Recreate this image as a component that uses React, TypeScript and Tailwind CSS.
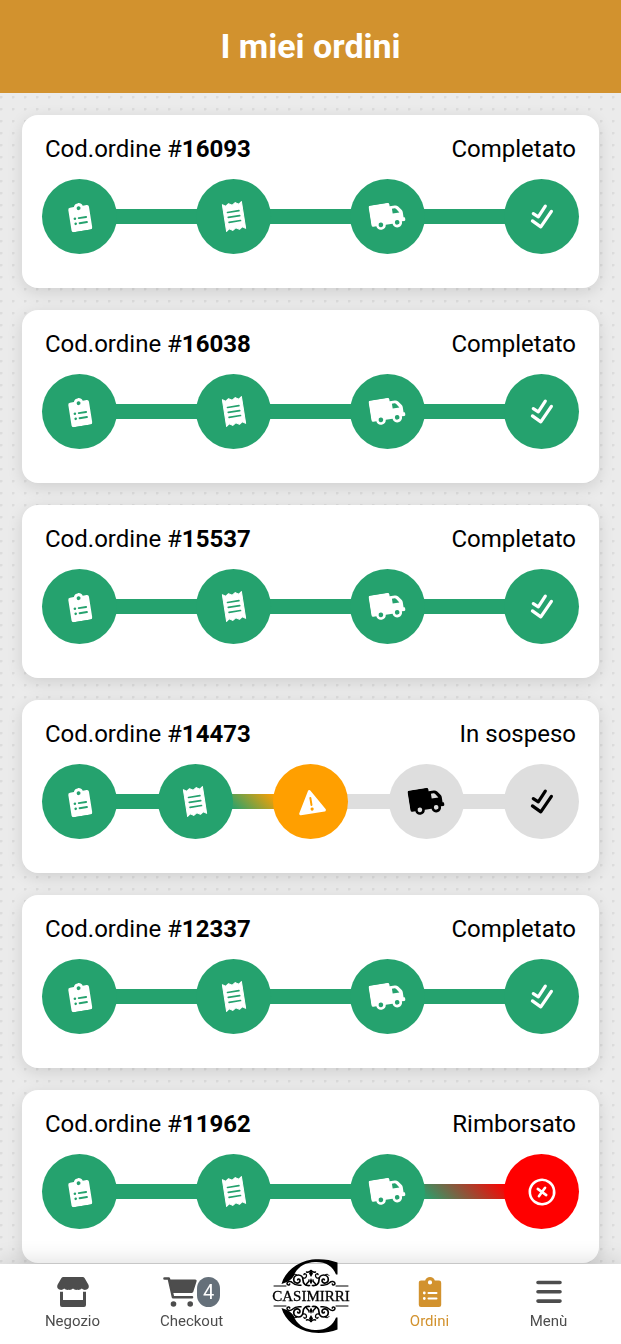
import { Fragment } from "react";
import clsx from "clsx";

type StepKind = "order" | "receipt" | "shipping" | "done" | "warning" | "refund";
type StepState = "complete" | "pending" | "alert" | "error";

interface Step {
  kind: StepKind;
  state: StepState;
}

interface Order {
  code: string;
  status: string;
  steps: Step[];
}

const completedSteps: Step[] = [
  { kind: "order", state: "complete" },
  { kind: "receipt", state: "complete" },
  { kind: "shipping", state: "complete" },
  { kind: "done", state: "complete" },
];

const orders: Order[] = [
  { code: "16093", status: "Completato", steps: completedSteps },
  { code: "16038", status: "Completato", steps: completedSteps },
  { code: "15537", status: "Completato", steps: completedSteps },
  {
    code: "14473",
    status: "In sospeso",
    steps: [
      { kind: "order", state: "complete" },
      { kind: "receipt", state: "complete" },
      { kind: "warning", state: "alert" },
      { kind: "shipping", state: "pending" },
      { kind: "done", state: "pending" },
    ],
  },
  { code: "12337", status: "Completato", steps: completedSteps },
  {
    code: "11962",
    status: "Rimborsato",
    steps: [
      { kind: "order", state: "complete" },
      { kind: "receipt", state: "complete" },
      { kind: "shipping", state: "complete" },
      { kind: "refund", state: "error" },
    ],
  },
];

const circleColors: Record<StepState, string> = {
  complete: "bg-[#25a26e] text-white",
  pending: "bg-[#dedede] text-black",
  alert: "bg-[#ff9f00] text-white",
  error: "bg-[#ff0000] text-white",
};

// the connector takes the colour of the step it leads to
const lineColors: Record<StepState, string> = {
  complete: "bg-[#25a26e]",
  pending: "bg-[#dedede]",
  alert: "bg-[linear-gradient(45deg,#25a26e,#ff9f00)]",
  error: "bg-[linear-gradient(45deg,#25a26e,#ff0000)]",
};

function ClipboardIcon({ className }: { className?: string }) {
  return (
    <svg viewBox="0 0 24 30" className={className} fill="currentColor" aria-hidden="true">
      <path
        fillRule="evenodd"
        d="M3 3.500h4.200C7.800 1.500 9.600 0 12 0s4.200 1.500 4.800 3.500H21a2.200 2.200 0 0 1 2.200 2.200v22A2.200 2.200 0 0 1 21 30H3a2.200 2.200 0 0 1-2.200-2.200v-22A2.200 2.200 0 0 1 3 3.500ZM12 3.300a2.100 2.100 0 1 0 0 4.200 2.100 2.100 0 0 0 0-4.200ZM6.300 14.600a1.400 1.400 0 1 0 0 2.800 1.400 1.400 0 0 0 0-2.800ZM10.500 15a1 1 0 0 0 0 2h8a1 1 0 0 0 0-2ZM6.300 20.100a1.400 1.400 0 1 0 0 2.800 1.400 1.400 0 0 0 0-2.800ZM10.500 20.500a1 1 0 0 0 0 2h8a1 1 0 0 0 0-2Z"
      />
    </svg>
  );
}

function ReceiptIcon() {
  return (
    <svg viewBox="0 0 22 30" className="h-[29px] w-[22px] -rotate-9" aria-hidden="true">
      <path
        fill="currentColor"
        stroke="currentColor"
        strokeLinejoin="round"
        d="M1 1 4 3.200 7.500 1 11 3.200 14.500 1 18 3.200 21 1V29L18 26.800 14.500 29 11 26.800 7.500 29 4 26.800 1 29Z"
      />
      <path
        className="stroke-[#25a26e]"
        strokeWidth="1.700"
        strokeLinecap="round"
        d="M5 9.800h12M5 15h12M5 20.200h12"
      />
    </svg>
  );
}

function TruckIcon() {
  return (
    <svg viewBox="0 0 37 29" className="h-[27px] w-[35px] -rotate-9" aria-hidden="true">
      <path
        fill="currentColor"
        fillRule="evenodd"
        d="M2 0h18.500a2 2 0 0 1 2 2v2H28c1.500 0 2.600.6 3.500 1.700l3 4c.6.800.9 1.700.9 2.700V18h.4a1.200 1.200 0 0 1 1.200 1.200v1.600a1.200 1.200 0 0 1-1.200 1.200H33a5.200 5.200 0 0 1-10.400 1H15.300A5.200 5.200 0 0 1 5 23H2a2 2 0 0 1-2-2V2A2 2 0 0 1 2 0ZM24.500 7v5.300h7.300L29 8q-.7-1-2-1ZM10.100 19.800a2.500 2.500 0 1 0 0 5 2.500 2.500 0 0 0 0-5ZM27.800 19.800a2.500 2.500 0 1 0 0 5 2.500 2.500 0 0 0 0-5Z"
      />
    </svg>
  );
}

function DoubleCheckIcon() {
  return (
    <svg
      viewBox="0 0 26 28"
      className="h-7 w-[26px]"
      fill="none"
      stroke="currentColor"
      strokeWidth="3.200"
      strokeLinecap="round"
      strokeLinejoin="round"
      aria-hidden="true"
    >
      <path d="m4.300 10.600 5 3.200 7-10.600M3.400 17.900l8.400 6L22.400 8.400" />
    </svg>
  );
}

function WarningIcon() {
  return (
    <svg viewBox="0 0 28 26" className="h-[26px] w-7 -rotate-9" aria-hidden="true">
      <path
        fill="currentColor"
        stroke="currentColor"
        strokeWidth="3"
        strokeLinejoin="round"
        d="M14 2.500 26 23H2Z"
      />
      <path className="stroke-[#ff9f00]" strokeWidth="2" strokeLinecap="round" d="M14 9v7" />
      <circle className="fill-[#ff9f00]" cx="14" cy="20.200" r="1.600" />
    </svg>
  );
}

function RefundIcon() {
  return (
    <svg
      viewBox="0 0 28 28"
      className="size-7 -rotate-9"
      fill="none"
      stroke="currentColor"
      strokeWidth="2.600"
      strokeLinecap="round"
      aria-hidden="true"
    >
      <circle cx="14" cy="14" r="12.200" />
      <path d="m10.300 10.300 7.400 7.400M17.700 10.300l-7.400 7.400" />
    </svg>
  );
}

function StepIcon({ kind }: { kind: StepKind }) {
  switch (kind) {
    case "order":
      return <ClipboardIcon className="h-7 w-6 -rotate-9" />;
    case "receipt":
      return <ReceiptIcon />;
    case "shipping":
      return <TruckIcon />;
    case "warning":
      return <WarningIcon />;
    case "refund":
      return <RefundIcon />;
    default:
      return <DoubleCheckIcon />;
  }
}

function OrderCard({ order }: { order: Order }) {
  return (
    <li className="rounded-2xl bg-white px-5 pt-[18px] pb-[34px] shadow-[0_4px_16px_rgba(0,0,0,0.12)]">
      <div className="flex items-center justify-between px-[3px] text-2xl">
        <h2>
          Cod.ordine #<b>{order.code}</b>
        </h2>
        <span>{order.status}</span>
      </div>
      <div className="mt-3.5 flex items-center">
        {order.steps.map((step, i) => (
          <Fragment key={step.kind}>
            {i > 0 && <div className={clsx("-mx-px h-[15px] flex-1", lineColors[step.state])} />}
            <div
              className={clsx(
                "z-1 flex size-[75px] shrink-0 items-center justify-center rounded-full",
                circleColors[step.state],
              )}
            >
              <StepIcon kind={step.kind} />
            </div>
          </Fragment>
        ))}
      </div>
    </li>
  );
}

function StoreIcon() {
  return (
    <svg viewBox="0 0 32 30" className="h-[30px] w-8" fill="currentColor" aria-hidden="true">
      <path d="M6.500 0h19c1 0 1.700.4 2.200 1.200l3.600 6.300c1.200 2.300.2 4.700-2.300 5.300-1.700.4-3.200-.2-4.200-1.300-1 1-2.700 1.700-4.400 1.300-1.700.4-3.400-.2-4.400-1.300-1 1.100-2.700 1.700-4.400 1.300-1.700.4-3.400-.3-4.400-1.300-1 1.100-2.500 1.700-4.200 1.300C.5 12.200-.5 9.800.7 7.500l3.600-6.300C4.800.4 5.500 0 6.500 0Z" />
      <path d="M3 14.800h3V23h20v-8.200h3V28a2 2 0 0 1-2 2H5a2 2 0 0 1-2-2Z" />
    </svg>
  );
}

function CartIcon() {
  return (
    <svg viewBox="0 0 34 30" className="h-[30px] w-[34px]" aria-hidden="true">
      <path
        fill="none"
        stroke="currentColor"
        strokeWidth="2.600"
        strokeLinecap="round"
        strokeLinejoin="round"
        d="M1.500 1.500h4.300L10 20.200h19"
      />
      <path fill="currentColor" d="M6.500 2.500h25.700c1 0 1.700.8 1.400 1.800l-3.300 10.500c-.2.700-.8 1.200-1.600 1.200H9Z" />
      <circle cx="10.500" cy="27" r="2.800" fill="currentColor" />
      <circle cx="27.200" cy="27" r="2.800" fill="currentColor" />
    </svg>
  );
}

function MenuIcon() {
  return (
    <svg
      viewBox="0 0 30 30"
      className="size-[30px]"
      stroke="currentColor"
      strokeWidth="3.600"
      strokeLinecap="round"
      aria-hidden="true"
    >
      <path d="M4 5.500h22M4 14.800h22M4 24.100h22" />
    </svg>
  );
}

function FlourishHalf() {
  return (
    <g fill="none" stroke="currentColor" strokeLinecap="round">
      <path
        strokeWidth="1.700"
        d="M39.500 27.500c-4 .3-6.500-1.500-6.500-5.500 0-3-2-5-4.700-5s-4.600 2-4.600 4.400 1.800 3.900 3.700 3.700 2.900-1.600 2.500-3-1.900-1.400-2.200-.3"
      />
      <path strokeWidth="1.300" d="M33 20c2 .5 3.500-.5 3.500-2.500s-2.300-2.200-2.600-.8" />
      <path strokeWidth="1.500" d="M41 12.500c-1.500 1.500-3 2-4.500 1.500M36 27c1-3 3.500-2.500 3-5" />
      <path
        strokeWidth="1.500"
        d="M31 27.200c-4 .6-6.500-.4-8.500-2.500-2-2-5.500-1.500-5.500.8 0 1.800 2.600 2 2.700.4"
      />
      <path strokeWidth="1" d="M27 17c-1.500-1.300-3-1-4 .5M4 28h12" />
    </g>
  );
}

function LogoTop() {
  return (
    <>
      <path
        fill="currentColor"
        d="M67.500 4.500C60 1.500 51 .5 42 1.500 26 4 15 14 11.500 26L17 24C21 22 24 19 25 15 29 8 36 4.500 45 4c10-.5 18 4 21 12.500h1.500Z"
      />
      <FlourishHalf />
      <g transform="matrix(-1 0 0 1 82 0)">
        <FlourishHalf />
      </g>
      <path fill="currentColor" d="M41 12l2 3.500-2 3.500-2-3.500ZM41 20l1.500 3.500-1.500 3-1.500-3Z" />
    </>
  );
}

function Logo() {
  return (
    <svg viewBox="0 0 82 76" className="h-[76px] w-[82px] text-black" role="img" aria-label="Casimirri">
      <LogoTop />
      <g transform="matrix(1 0 0 -1 0 76)">
        <LogoTop />
      </g>
      <text
        x="41"
        y="43"
        textAnchor="middle"
        fill="currentColor"
        stroke="currentColor"
        strokeWidth=".3"
        className="font-['Liberation_Serif',serif] text-[15px]"
      >
        CASIMIRRI
      </text>
    </svg>
  );
}

const navItem = "flex flex-col items-center gap-1 pt-[13px] text-[15px] leading-5";

function BottomNav() {
  return (
    <nav className="fixed inset-x-0 bottom-0 z-10 grid h-20 grid-cols-5 bg-white px-[13px] text-[#4d4d4d] shadow-[0_-4px_20px_rgba(0,0,0,0.12)]">
      <a href="#negozio" className={navItem}>
        <StoreIcon />
        Negozio
      </a>
      <a href="#checkout" className={navItem}>
        <span className="flex">
          <CartIcon />
          <span className="flex h-[30px] w-[23px] items-center justify-center rounded-full bg-[#65707a] text-xl text-white">
            4
          </span>
        </span>
        Checkout
      </a>
      <a href="#home" className="-mt-1.5 flex items-start justify-center">
        <Logo />
      </a>
      <a href="#ordini" aria-current="page" className={clsx(navItem, "text-[#d2922e]")}>
        <ClipboardIcon className="h-[30px] w-6" />
        Ordini
      </a>
      <a href="#menu" className={navItem}>
        <MenuIcon />
        Menù
      </a>
    </nav>
  );
}

export default function App() {
  return (
    <div className="min-h-screen bg-[#ebebeb] bg-[radial-gradient(circle_at_1px_1px,#dcdcdc_1px,transparent_2px)] bg-size-[12px_12px] font-[Roboto,sans-serif] text-black">
      <header className="flex h-[93px] items-center justify-center bg-[#d2922e] text-white">
        <h1 className="text-[34px] font-bold">I miei ordini</h1>
      </header>
      <main className="px-[22px] pt-[22px] pb-20">
        <ul className="flex flex-col gap-[22px]">
          {orders.map((order) => (
            <OrderCard key={order.code} order={order} />
          ))}
        </ul>
      </main>
      <BottomNav />
    </div>
  );
}
